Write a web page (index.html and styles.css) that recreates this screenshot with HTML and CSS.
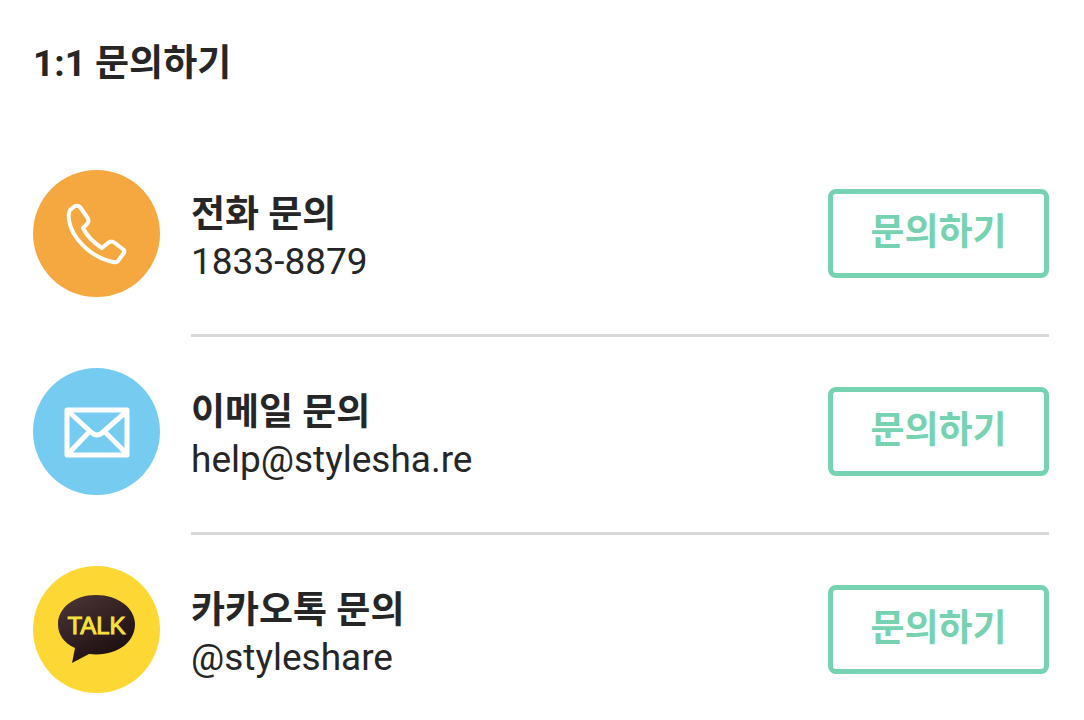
FILE: index.html
```html
<!DOCTYPE html>
<html lang="ko">
<head>
  <meta charset="UTF-8">
  <meta name="viewport" content="width=device-width, initial-scale=1.0">
  <title>1:1 문의하기</title>
  <link rel="stylesheet" href="styles.css">
</head>
<body>
  <main class="contact">
    <h1>1:1 문의하기</h1>

    <ul class="contact-list">
      <li class="contact-item">
        <svg class="icon" viewBox="0 0 127 127" aria-hidden="true">
          <circle cx="63.5" cy="63.5" r="63.5" fill="#f5a83f"/>
          <path d="M42 36 Q45 35 47 37 L54 47 Q57 51 54 54 L50 58 C54 66 61 73 69 78 L75 73 Q78 70 82 73 L91 80 Q92 82 90 84 L85 91 Q83 93 80 92 C56 87 38 66 36 50 Q35 43 37 40 Z" fill="none" stroke="#fff" stroke-width="4" stroke-linejoin="round"/>
        </svg>
        <div class="contact-body">
          <div class="contact-text">
            <h2>전화 문의</h2>
            <p>1833-8879</p>
          </div>
          <button type="button">문의하기</button>
        </div>
      </li>

      <li class="contact-item">
        <svg class="icon" viewBox="0 0 127 127" aria-hidden="true">
          <circle cx="63.5" cy="63.5" r="63.5" fill="#76cbf1"/>
          <g fill="none" stroke="#fff" stroke-width="5" stroke-linejoin="round">
            <rect x="34" y="42" width="60" height="45"/>
            <path d="M35 43 L59 65 Q64 69 69 65 L94 43 M35 86 L57 63 M94 86 L71 63"/>
          </g>
        </svg>
        <div class="contact-body">
          <div class="contact-text">
            <h2>이메일 문의</h2>
            <p>help@stylesha.re</p>
          </div>
          <button type="button">문의하기</button>
        </div>
      </li>

      <li class="contact-item">
        <svg class="icon" viewBox="0 0 127 127" aria-hidden="true">
          <defs>
            <linearGradient id="bubble" x1="0" y1="0" x2="0.6" y2="1">
              <stop offset="0" stop-color="#4e3637"/>
              <stop offset="1" stop-color="#1c0e10"/>
            </linearGradient>
          </defs>
          <circle cx="63.5" cy="63.5" r="63.5" fill="#fdd835"/>
          <path d="M63 29 C41 29 25 42 25 58 C25 69 31 77 42 82 L39 97 L56 88 C83 91 102 77 102 58 C102 42 85 29 63 29Z" fill="url(#bubble)"/>
          <text x="63.5" y="68" text-anchor="middle" class="talk">TALK</text>
        </svg>
        <div class="contact-body">
          <div class="contact-text">
            <h2>카카오톡 문의</h2>
            <p>@styleshare</p>
          </div>
          <button type="button">문의하기</button>
        </div>
      </li>
    </ul>
  </main>
</body>
</html>
```
FILE: styles.css
```css
* {
  margin: 0;
  padding: 0;
  box-sizing: border-box;
}

body {
  font-family: Roboto, 'Noto Sans CJK KR', sans-serif;
  background: #fff;
  color: #262626;
}

.contact {
  padding: 40px 35px 0 33px;
}

h1,
h2 {
  font-size: 37px;
  font-weight: 700;
  line-height: 48px;
}

.contact-list {
  list-style: none;
  margin-top: 51px;
}

.contact-item {
  display: flex;
  gap: 31px;
}

.icon {
  flex: none;
  width: 127px;
  height: 127px;
  margin-top: 31px;
}

.contact-body {
  flex: 1;
  display: flex;
  align-items: center;
  justify-content: space-between;
  height: 198px;
  padding-bottom: 6px;
  border-bottom: 3px solid #d8d8d8;
}

.contact-item:last-child .contact-body {
  border-bottom-color: transparent;
}

.contact-text {
  padding-top: 8px;
}

.contact-text p {
  font-size: 37px;
  line-height: 46px;
}

button {
  width: 221px;
  height: 89px;
  padding-bottom: 10px;
  border: 5px solid #76d2b0;
  border-radius: 8px;
  background: #fff;
  color: #76d2b0;
  font-family: inherit;
  font-size: 37px;
  font-weight: 700;
  cursor: pointer;
}

.talk {
  fill: #f6e23c;
  stroke: #f6e23c;
  stroke-width: 1px;
  font-family: 'Liberation Sans', sans-serif;
  font-size: 24px;
}
```
